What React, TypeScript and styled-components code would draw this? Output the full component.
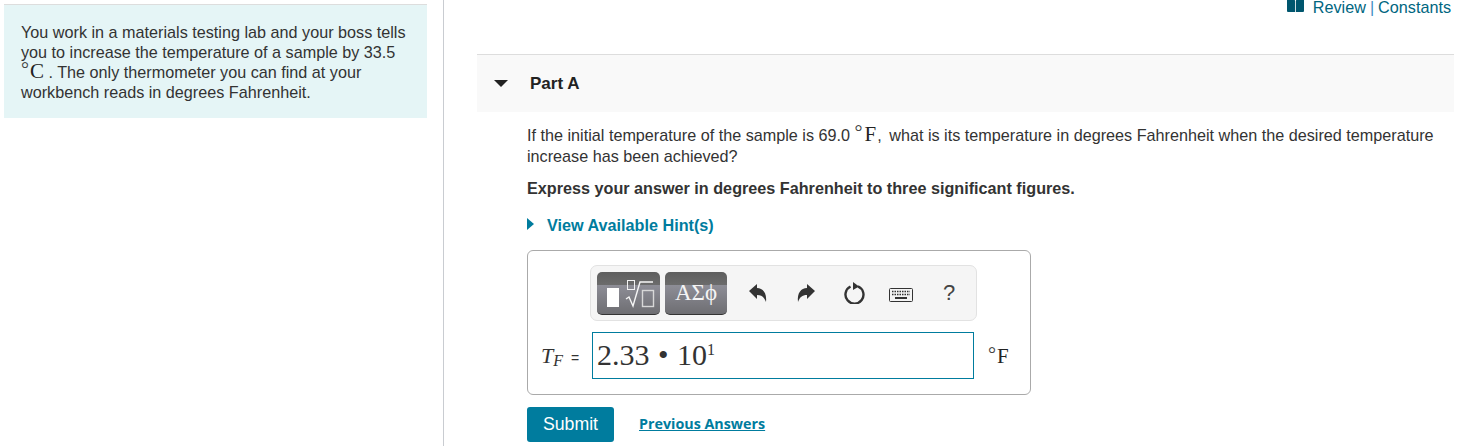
import React from 'react';
import styled, { createGlobalStyle } from 'styled-components';

const GlobalStyle = createGlobalStyle`
  html, body {
    margin: 0;
    padding: 0;
    background: #fff;
  }
  body {
    font-family: "Liberation Sans", Arial, sans-serif;
    font-size: 16.2px;
    color: #333;
  }
`;

const Page = styled.div`
  display: flex;
  width: 1471px;
  height: 446px;
  overflow: hidden;
`;

const Sidebar = styled.aside`
  width: 444px;
  flex: none;
  box-sizing: border-box;
  padding: 4px 16px 0 4px;
  border-right: 1px solid #c9ccd1;
`;

const IntroBox = styled.div`
  box-sizing: border-box;
  height: 114px;
  padding: 17px 16px 0 17px;
  background: #e5f5f6;
  border-top: 1px solid #ddd;
  line-height: 20px;
`;

const Main = styled.main`
  flex: 1;
  min-width: 0;
  padding-left: 33px;
  padding-right: 17px;
`;

const TopLinks = styled.div`
  display: flex;
  justify-content: flex-end;
  align-items: flex-start;
  height: 54px;
  padding-right: 3px;
  line-height: 15px;
  color: #00667f;
`;

const BookIcon = styled.svg`
  width: 17px;
  height: 12px;
  margin-right: 9px;
  margin-top: 0;
`;

const Divider = styled.span`
  color: #3d8fc4;
  margin: 0 4px;
`;

const PartHeader = styled.div`
  display: flex;
  align-items: center;
  box-sizing: border-box;
  height: 58px;
  padding-left: 17px;
  background: #f9f9f9;
  border-top: 1px solid #ddd;
`;

const Caret = styled.span`
  width: 0;
  height: 0;
  border-left: 7px solid transparent;
  border-right: 7px solid transparent;
  border-top: 7px solid #222;
  margin-right: 22px;
`;

const PartTitle = styled.h2`
  margin: 1px 0 0;
  font-size: 17px;
  font-weight: 700;
  color: #222;
`;

const PartBody = styled.div`
  padding: 13px 0 0 50px;
`;

const Question = styled.p`
  margin: 0;
  line-height: 21px;
`;

const Comma = styled.span`
  margin: 0 3px 0 1px;
`;

const Instruction = styled.p`
  margin: 11px 0 0;
  line-height: 21px;
  font-weight: 700;
`;

const HintRow = styled.div`
  display: flex;
  align-items: center;
  margin-top: 16px;
  height: 21px;
  font-weight: 700;
  color: #007c9e;
`;

const HintCaret = styled.span`
  width: 0;
  height: 0;
  border-top: 6px solid transparent;
  border-bottom: 6px solid transparent;
  border-left: 7px solid #007c9e;
  margin: 0 13px 3px 0;
`;

const AnswerBox = styled.div`
  box-sizing: border-box;
  width: 504px;
  height: 145px;
  margin-top: 14px;
  padding: 14px 21px 0 13px;
  border: 1px solid #aaa;
  border-radius: 6px;
`;

const Toolbar = styled.div`
  display: flex;
  align-items: center;
  box-sizing: border-box;
  width: 387px;
  height: 56px;
  margin-left: 49px;
  padding-left: 6px;
  background: #f5f5f5;
  border: 1px solid #e2e2e2;
  border-radius: 7px;
`;

const TemplateButton = styled.div<{ $width: number }>`
  display: flex;
  align-items: center;
  justify-content: center;
  box-sizing: border-box;
  width: ${(p) => p.$width}px;
  height: 43px;
  margin-right: 5px;
  border-radius: 5px;
  border-bottom: 1px solid #333;
  background: linear-gradient(#5e5e5e 0, #6c6c6c 31%, #8d8d96 32%, #6e6e72 100%);
  color: #f4f4f4;
`;

const GreekLabel = styled.span`
  font-family: "Liberation Serif", serif;
  font-size: 23px;
  line-height: 1;
`;

const ToolIcon = styled.svg<{ $gap: number; $drop?: number }>`
  flex: none;
  margin-left: ${(p) => p.$gap}px;
  margin-top: ${(p) => p.$drop ?? 0}px;
`;

const HelpMark = styled.span`
  margin-left: 30px;
  font-size: 22px;
  color: #444;
`;

const InputRow = styled.div`
  display: flex;
  align-items: center;
  margin-top: 11px;
`;

const VarLabel = styled.div`
  display: flex;
  align-items: baseline;
  width: 51px;
  flex: none;
  font-family: "Liberation Serif", serif;
  font-style: italic;
  font-size: 22px;
  color: #333;
`;

const VarSub = styled.span`
  font-size: 16px;
  position: relative;
  top: 3px;
`;

const VarEquals = styled.span`
  font-family: "Liberation Sans", sans-serif;
  font-style: normal;
  font-size: 14px;
  margin-left: 8px;
`;

const MathInput = styled.div`
  display: flex;
  align-items: center;
  box-sizing: border-box;
  width: 382px;
  height: 47px;
  padding: 0 4px 1px;
  border: 1px solid #007c9e;
  font-family: "Liberation Serif", serif;
  font-size: 30px;
  color: #333;
  white-space: pre;
`;

const Bullet = styled.span`
  margin: 0 1px;
`;

const Exponent = styled.span`
  align-self: flex-start;
  margin-top: 9px;
  font-size: 16px;
  line-height: 1;
`;

const UnitLabel = styled.span`
  margin: 4px 0 0 14px;
`;

const Actions = styled.div`
  display: flex;
  align-items: center;
  margin-top: 12px;
`;

const SubmitButton = styled.button`
  box-sizing: border-box;
  width: 87px;
  height: 35px;
  padding: 0;
  border: none;
  border-radius: 3px;
  background: #007c9e;
  color: #fff;
  font-family: "Liberation Sans", sans-serif;
  font-size: 17.7px;
`;

const PreviousLink = styled.a`
  margin-left: 25px;
  font-family: "Open Sans", sans-serif;
  font-size: 14.3px;
  font-weight: 700;
  color: #007c9e;
  text-decoration: underline;
  position: relative;
  top: -1px;
`;

const UnitSign = styled.span<{ $gap: number }>`
  font-family: "Liberation Serif", serif;
  font-size: 20px;
  line-height: 0;
  position: relative;
  top: -2px;
  margin-right: ${(p) => p.$gap}px;
  color: #444;
`;

const UnitLetter = styled.span`
  font-family: "Liberation Serif", serif;
  font-size: 21px;
  line-height: 0;
  color: #222;
`;

const Temp = ({ unit, gap = 1 }: { unit: string; gap?: number }) => (
  <>
    <UnitSign $gap={gap}>°</UnitSign>
    <UnitLetter>{unit}</UnitLetter>
  </>
);

const TemplateIcon = () => (
  <svg width="63" height="42" viewBox="0 0 63 42">
    <rect x="10" y="16" width="12" height="19" fill="#fff" />
    <rect x="30.500" y="8.500" width="7" height="9" fill="none" stroke="#f2f2f2" />
    <path d="M29 27l3-2 4 9 7-24h13" fill="none" stroke="#f6f6f6" strokeWidth="1.400" />
    <rect x="45.500" y="18.500" width="11" height="16" fill="none" stroke="#d8d8d8" strokeWidth="1.400" />
  </svg>
);

export default function App() {
  return (
    <Page>
      <GlobalStyle />
      <Sidebar>
        <IntroBox>
          You work in a materials testing lab and your boss tells you to increase the temperature of a sample by 33.5{' '}
          <Temp unit="C" /> . The only thermometer you can find at your workbench reads in degrees Fahrenheit.
        </IntroBox>
      </Sidebar>
      <Main>
        <TopLinks>
          <BookIcon viewBox="0 0 17 12">
            <path d="M0 0h7.500q.6 0 .6 1v11H1q-1 0-1-1zM17 0H9.500q-.6 0-.6 1v11H16q1 0 1-1z" fill="#00566e" />
          </BookIcon>
          Review<Divider>|</Divider>Constants
        </TopLinks>
        <PartHeader>
          <Caret />
          <PartTitle>Part A</PartTitle>
        </PartHeader>
        <PartBody>
          <Question>
            If the initial temperature of the sample is 69.0 <Temp unit="F" gap={2} />
            <Comma>,</Comma> what is its temperature in degrees Fahrenheit when the desired temperature increase has
            been achieved?
          </Question>
          <Instruction>Express your answer in degrees Fahrenheit to three significant figures.</Instruction>
          <HintRow>
            <HintCaret />
            View Available Hint(s)
          </HintRow>
          <AnswerBox>
            <Toolbar>
              <TemplateButton $width={63}>
                <TemplateIcon />
              </TemplateButton>
              <TemplateButton $width={62}>
                <GreekLabel>ΑΣϕ</GreekLabel>
              </TemplateButton>
              <ToolIcon $gap={17} width="18" height="18" viewBox="0 0 18 18">
                <path d="M0 7l8-7v4c6 0 10 5 9 14-2-5-4-7-9-7v4z" fill="#333" />
              </ToolIcon>
              <ToolIcon $gap={30} width="18" height="18" viewBox="0 0 18 18">
                <path d="M18 7l-8-7v4C4 4 0 9 1 18c2-5 4-7 9-7v4z" fill="#333" />
              </ToolIcon>
              <ToolIcon $gap={29} width="21" height="22" viewBox="0 0 21 22">
                <path d="M6.500 4.500a9 9 0 1 0 7.500-.2" fill="none" stroke="#333" strokeWidth="2.400" />
                <path d="M9 0l6 4.500L9 8z" fill="#333" />
              </ToolIcon>
              <ToolIcon $gap={24} $drop={3} width="24" height="14" viewBox="0 0 24 14">
                <rect x="0.500" y="0.500" width="23" height="13" rx="1" fill="#f4f4f4" stroke="#333" />
                <path d="M3 3.500h18M3 6.500h18" stroke="#333" strokeWidth="1.600" strokeDasharray="1.500 1" />
                <path d="M6 10h12" stroke="#333" strokeWidth="2" />
              </ToolIcon>
              <HelpMark>?</HelpMark>
            </Toolbar>
            <InputRow>
              <VarLabel>
                T<VarSub>F</VarSub>
                <VarEquals>=</VarEquals>
              </VarLabel>
              <MathInput>
                2.33 <Bullet>•</Bullet> 10<Exponent>1</Exponent>
              </MathInput>
              <UnitLabel>
                <Temp unit="F" />
              </UnitLabel>
            </InputRow>
          </AnswerBox>
          <Actions>
            <SubmitButton>Submit</SubmitButton>
            <PreviousLink>Previous Answers</PreviousLink>
          </Actions>
        </PartBody>
      </Main>
    </Page>
  );
}
